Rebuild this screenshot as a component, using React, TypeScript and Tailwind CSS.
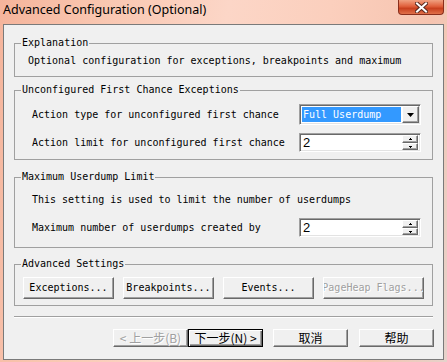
import React from 'react';

const mono = "font-['DejaVu_Sans_Mono','Liberation_Mono',monospace] text-[10px] leading-[12px] text-black";
const raised =
  'bg-[#f0f0f0] border border-t-white border-l-white border-r-[#696969] border-b-[#696969] shadow-[inset_-1px_-1px_0_#a0a0a0]';
const sunken =
  'bg-white border border-t-[#a0a0a0] border-l-[#a0a0a0] border-b-white border-r-white shadow-[inset_1px_1px_0_#696969,inset_-1px_-1px_0_#e3e3e3]';
const cjk = "font-['Noto_Sans_CJK_SC','Noto_Sans',sans-serif] text-[12px] leading-[14px]";

function Group({ title, className, children }: { title: string; className: string; children: React.ReactNode }) {
  return (
    <fieldset className={`border border-[#a0a0a0] px-[6px] min-w-0 ${className}`}>
      <legend className={`px-[1px] ${mono}`}>{title}</legend>
      {children}
    </fieldset>
  );
}

function SpinBox({ value }: { value: string }) {
  return (
    <div className={`w-[122px] h-[19px] flex items-center pl-[3px] pr-[2px] ${sunken}`}>
      <span className="flex-1 font-['Liberation_Sans',Arial,sans-serif] text-[13px] leading-[15px] text-black">{value}</span>
      <div className="flex flex-col w-[16px] h-[15px]">
        <div className={`h-[8px] flex items-center justify-center ${raised}`}>
          <svg width="3" height="2" viewBox="0 0 3 2"><path d="M1 0h1v1h1v1H0V1h1z" fill="#000" /></svg>
        </div>
        <div className={`h-[7px] flex items-center justify-center ${raised}`}>
          <svg width="3" height="2" viewBox="0 0 3 2"><path d="M0 0h3v1H2v1H1V1H0z" fill="#000" /></svg>
        </div>
      </div>
    </div>
  );
}

function ComboBox() {
  return (
    <div className={`w-[122px] h-[21px] flex items-center pl-[2px] pr-[1px] ${sunken}`}>
      <div className="flex-1 h-[15px] bg-[#3399ff] flex items-center pl-[1px]">
        <span className={`${mono} !text-white`}>Full Userdump</span>
      </div>
      <div className={`ml-[1px] w-[17px] h-[17px] flex items-center justify-center ${raised}`}>
        <svg width="7" height="4" viewBox="0 0 7 4"><path d="M0 0h7L3.5 4z" fill="#000" /></svg>
      </div>
    </div>
  );
}

function Btn({ label, className, disabled }: { label: string; className: string; disabled?: boolean }) {
  return (
    <div className={`h-[22px] flex items-center justify-center overflow-hidden ${raised} ${className}`}>
      <span
        className={`whitespace-nowrap ${mono} ${disabled ? '!text-[#a0a0a0] [text-shadow:1px_1px_0_#fff]' : ''}`}
      >
        {label}
      </span>
    </div>
  );
}

export default function App() {
  return (
    <div className="w-[447px] h-[362px] overflow-hidden flex flex-col bg-[linear-gradient(100deg,#f5b49b_0%,#f9c6b0_20%,#fcd6c7_45%,#fbcfbd_65%,#f6c4b0_85%,#e6d2cb_100%)]">
      {/* Title bar */}
      <div className="h-[24px] flex items-start justify-between shrink-0">
        <span className="ml-[3px] mt-[2px] font-['Noto_Sans','Noto_Sans_CJK_SC',sans-serif] text-[12.5px] leading-[16px] text-black">
          Advanced Configuration (Optional)
        </span>
        <div className="mr-[3px] w-[46px] h-[15px] rounded-b-[4px] border border-t-0 border-[#8a2e1c] bg-[linear-gradient(180deg,#f0a080_0%,#e0603c_45%,#c8401e_60%,#e0704a_100%)] flex items-center justify-center">
          <svg width="13" height="11" viewBox="0 0 13 11">
            <path d="M2 1.5l9 8M11 1.5l-9 8" stroke="#5a2a20" strokeWidth="4" strokeLinecap="square" />
            <path d="M2 1.5l9 8M11 1.5l-9 8" stroke="#fff" strokeWidth="2" strokeLinecap="square" />
          </svg>
        </div>
      </div>

      {/* Client area */}
      <div className="mx-[3px] h-[336px] shrink-0 border border-[#7a7a7a] bg-[#f0f0f0] flex flex-col px-[10px]">
        <Group title="Explanation" className="mt-[12px] h-[40px]">
          <div className={`pl-[7px] mt-[6px] ${mono}`}>
            Optional configuration for exceptions, breakpoints and maximum
          </div>
        </Group>

        <Group title="Unconfigured First Chance Exceptions" className="mt-[7px] h-[76px]">
          <div className="pl-[11px] mt-[8px] flex items-center h-[21px]">
            <span className={`w-[267px] ${mono}`}>Action type for unconfigured first chance</span>
            <ComboBox />
          </div>
          <div className="pl-[11px] mt-[8px] flex items-center h-[19px]">
            <span className={`w-[267px] ${mono}`}>Action limit for unconfigured first chance</span>
            <SpinBox value="2" />
          </div>
        </Group>

        <Group title="Maximum Userdump Limit" className="mt-[11px] h-[77px]">
          <div className={`pl-[11px] mt-[11px] ${mono}`}>This setting is used to limit the number of userdumps</div>
          <div className="pl-[11px] mt-[12px] flex items-center h-[19px]">
            <span className={`w-[267px] ${mono}`}>Maximum number of userdumps created by</span>
            <SpinBox value="2" />
          </div>
        </Group>

        <Group title="Advanced Settings" className="mt-[10px] h-[48px]">
          <div className="pl-[2px] mt-[7px] flex gap-[9px]">
            <Btn label="Exceptions..." className="w-[91px]" />
            <Btn label="Breakpoints..." className="w-[91px]" />
            <Btn label="Events..." className="w-[91px]" />
            <Btn label="PageHeap Flags..." className="w-[101px]" disabled />
          </div>
        </Group>

        <div className="mt-[10px] h-[2px] border-t border-b border-t-[#a0a0a0] border-b-white" />

        <div className="mt-[11px] flex justify-end -mr-[1px]">
          <div className={`w-[75px] h-[18px] flex items-center justify-center ${raised}`}>
            <span className={`${cjk} text-[#a0a0a0] [text-shadow:1px_1px_0_#fff]`}>&lt; 上一步(B)</span>
          </div>
          <div className="w-[75px] h-[18px] flex items-center justify-center bg-[#f0f0f0] border border-black shadow-[inset_1px_1px_0_#fff,inset_-1px_-1px_0_#696969,inset_-2px_-2px_0_#a0a0a0]">
            <span className={`${cjk} text-black`}>下一步(N) &gt;</span>
          </div>
          <div className={`ml-[10px] w-[75px] h-[18px] flex items-center justify-center ${raised}`}>
            <span className={`${cjk} text-black`}>取消</span>
          </div>
          <div className={`ml-[11px] w-[75px] h-[18px] flex items-center justify-center ${raised}`}>
            <span className={`${cjk} text-black`}>帮助</span>
          </div>
        </div>
      </div>
    </div>
  );
}
